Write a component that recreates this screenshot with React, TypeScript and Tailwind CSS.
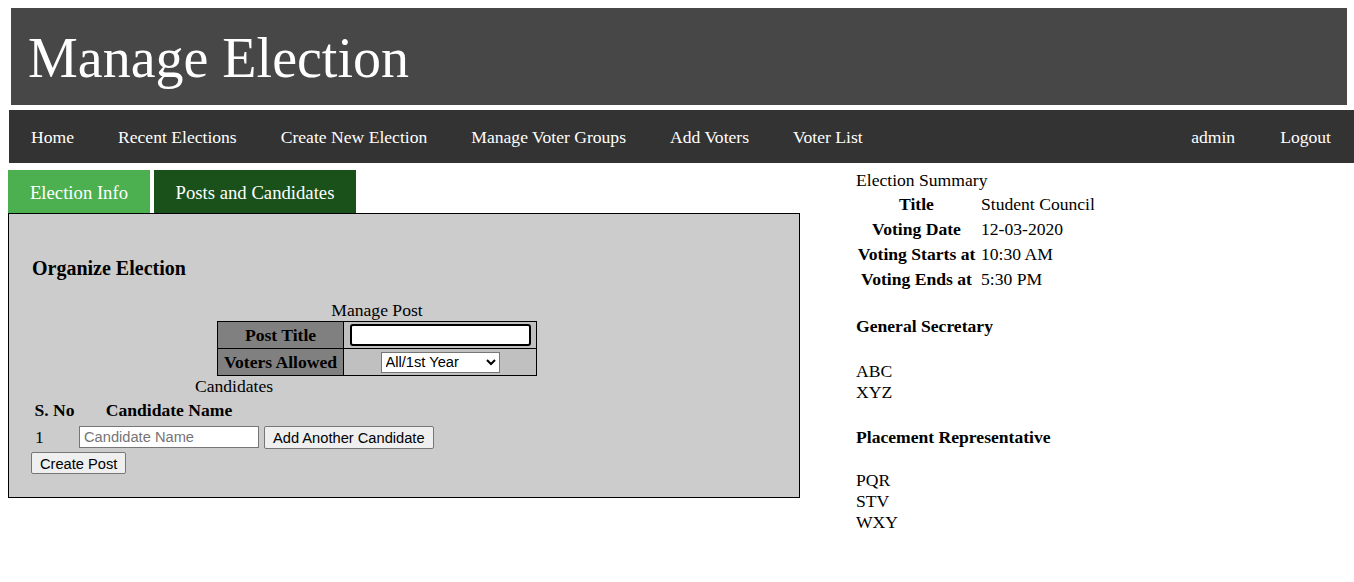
export default function App() {
  const navLeft = ["Home", "Recent Elections", "Create New Election", "Manage Voter Groups", "Add Voters", "Voter List"];
  const summary = [
    ["Title", "Student Council"],
    ["Voting Date", "12-03-2020"],
    ["Voting Starts at", "10:30 AM"],
    ["Voting Ends at", "5:30 PM"],
  ];

  return (
    <div className="min-h-[582px] bg-white px-[8px] pt-[8px] font-['Liberation_Serif',serif] text-black overflow-hidden">
      {/* header */}
      <div className="ml-[3px] mr-[-1px] bg-[#474747] pt-[18px] pb-[15px] pl-[17px]">
        <h1 className="text-[56px] leading-[64px] text-white">Manage Election</h1>
      </div>

      {/* nav */}
      <div className="ml-[1px] mr-[-8px] mt-[5px] flex h-[53px] items-center bg-[#333333] pt-[1px] text-[17.6px] text-white">
        {navLeft.map((n) => (
          <span key={n} className="px-[22px]">
            {n}
          </span>
        ))}
        <div className="ml-auto flex">
          <span className="px-[22px]">admin</span>
          <span className="px-[23px]">Logout</span>
        </div>
      </div>

      <div className="mt-[7px] flex">
        {/* left column */}
        <div className="w-[792px]">
          <div className="flex gap-[4px] text-[18.7px] text-white">
            <div className="flex h-[43px] w-[142px] items-center justify-center bg-[#4caf50] pt-[3px]">Election Info</div>
            <div className="flex h-[43px] w-[202px] items-center justify-center bg-[#1a511a] pt-[3px]">Posts and Candidates</div>
          </div>
          <div className="h-[285px] border border-black bg-[#cccccc] px-[23px] pt-[43px] text-[17.6px]">
            <h3 className="text-[20px] font-bold leading-[23px]">Organize Election</h3>

            <div className="mt-[20px] w-[690px]">
              <div className="text-center leading-[21px]">Manage Post</div>
              <div className="mx-auto grid w-[320px] grid-cols-[126px_192px] border border-black">
                <div className="flex h-[27px] items-center justify-center border-r border-b border-black bg-[#808080] font-bold">
                  Post Title
                </div>
                <div className="flex h-[27px] items-center border-b border-black bg-[#c0c0c0] pl-[6px]">
                  <input className="h-[22px] w-[181px] rounded-[3px] border-2 border-black bg-white outline-none" />
                </div>
                <div className="flex h-[26px] items-center justify-center border-r border-black bg-[#808080] font-bold">
                  Voters Allowed
                </div>
                <div className="flex h-[26px] items-center justify-center bg-[#c0c0c0]">
                  <select className="h-[21px] w-[119px] border border-[#767676] bg-white font-['Liberation_Sans',sans-serif] text-[14.67px]">
                    <option>All/1st Year</option>
                  </select>
                </div>
              </div>
            </div>

            <div className="w-[404px]">
              <div className="text-center leading-[20px]">Candidates</div>
              <div className="mt-[4px] flex font-bold leading-[20px]">
                <span className="w-[45px] text-center">S. No</span>
                <span className="ml-[-1px] w-[186px] text-center">Candidate Name</span>
              </div>
              <div className="mt-[4px] flex items-center font-['Liberation_Sans',sans-serif] text-[14.67px]">
                <span className="w-[45px] pl-[3px] font-['Liberation_Serif',serif] text-[17.6px]">1</span>
                <input
                  placeholder="Candidate Name"
                  className="ml-[2px] h-[22px] w-[180px] border border-[#767676] bg-white px-[4px] placeholder:text-[#757575] outline-none"
                />
                <button className="ml-[5px] h-[23px] rounded-[2px] border border-[#767676] bg-[#efefef] px-[8px]">
                  Add Another Candidate
                </button>
              </div>
            </div>
            <button className="ml-[-1px] mt-[1px] h-[22px] rounded-[2px] border border-[#767676] bg-[#efefef] px-[8px] font-['Liberation_Sans',sans-serif] text-[14.67px]">
              Create Post
            </button>
          </div>
        </div>

        {/* right column */}
        <div className="ml-[56px] text-[17.6px]">
          <div className="leading-[20px]">Election Summary</div>
          <div className="mt-[2px]">
            {summary.map(([k, v]) => (
              <div key={k} className="flex h-[25px] items-center">
                <span className="w-[121px] text-center font-bold">{k}</span>
                <span className="pl-[4px]">{v}</span>
              </div>
            ))}
          </div>
          <div className="mt-[24px] font-bold leading-[20px]">General Secretary</div>
          <div className="mt-[25px] leading-[21px]">
            <div>ABC</div>
            <div>XYZ</div>
          </div>
          <div className="mt-[24px] font-bold leading-[20px]">Placement Representative</div>
          <div className="mt-[23px] leading-[21px]">
            <div>PQR</div>
            <div>STV</div>
            <div>WXY</div>
          </div>
        </div>
      </div>
    </div>
  );
}
